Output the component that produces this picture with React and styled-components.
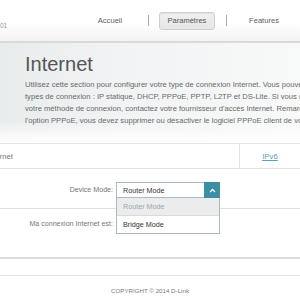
import React from "react";
import styled, { createGlobalStyle } from "styled-components";

const Global = createGlobalStyle`
  html, body {
    margin: 0;
    padding: 0;
    background: #fff;
    overflow: hidden;
  }
  body {
    font-family: "Liberation Sans", Arial, sans-serif;
  }
`;

const Page = styled.div`
  width: 300px;
  height: 300px;
  overflow: hidden;
  display: flex;
  flex-direction: column;
`;

const Header = styled.div`
  height: 41px;
  flex: none;
  display: flex;
  align-items: center;
  background: linear-gradient(to bottom, #ffffff 0%, #ffffff 55%, #f3f3f3 100%);
  border-bottom: 2px solid #d9d9d9;
  font-size: 7.6px;
  color: #5e5e5e;
`;

const Brand = styled.div`
  width: 85px;
  align-self: flex-start;
  padding-top: 22px;
  font-size: 6.5px;
  color: #999;
`;

const NavLink = styled.div`
  width: ${(p) => p.$w}px;
  margin-left: ${(p) => p.$ml || 0}px;
  text-align: center;
  white-space: nowrap;
`;

const NavSep = styled.div`
  width: 1px;
  height: 11px;
  margin-left: ${(p) => p.$ml}px;
  background: #a9a9a9;
`;

const NavTab = styled.div`
  width: 54px;
  height: 16px;
  margin-left: 10px;
  display: flex;
  align-items: center;
  justify-content: center;
  background: linear-gradient(to bottom, #f0f0f0, #e6e6e6);
  border: 1px solid #cfcfcf;
  border-radius: 3px;
  box-shadow: inset 0 1px 1px rgba(0, 0, 0, 0.06);
  font-size: 7.5px;
  color: #555;
`;

const Hero = styled.div`
  height: 100px;
  flex: none;
  box-sizing: border-box;
  padding: 11px 0 0 25px;
  background:
    linear-gradient(to bottom, rgba(255, 255, 255, 0) 78%, #ffffff 100%),
    linear-gradient(to right, #e9eced 0%, #f1f3f4 40%, #f8f9f9 100%);
`;

const Title = styled.h1`
  margin: 0 0 5px;
  font-size: 20px;
  line-height: 20px;
  font-weight: normal;
  color: #555;
`;

const Intro = styled.p`
  margin: 0;
  font-size: 7.62px;
  line-height: 11.9px;
  color: #6a6a6a;
  white-space: nowrap;
`;

const TabRow = styled.div`
  height: 24px;
  flex: none;
  display: flex;
  border-top: 1px solid #e6e6e6;
  border-bottom: 1px solid #e3e3e3;
`;

const TabCell = styled.div`
  flex: ${(p) => (p.$grow ? 1 : "none")};
  width: ${(p) => (p.$grow ? "auto" : "60px")};
  display: flex;
  align-items: center;
  justify-content: ${(p) => (p.$grow ? "flex-start" : "center")};
  border-left: ${(p) => (p.$grow ? "none" : "1px solid #e6e6e6")};
  font-size: 7.6px;
  color: #777;
  white-space: nowrap;
`;

const TabLabel = styled.span`
  margin-left: -13px;
`;

const TabLink = styled.span`
  color: #5a9fb3;
  text-decoration: underline;
  font-size: 7.8px;
`;

const Form = styled.div`
  flex: none;
  border-bottom: 2px solid #dcdcdc;
`;

const Row = styled.div`
  display: grid;
  grid-template-columns: 113px 104px;
  column-gap: 3px;
  align-items: center;
  padding: ${(p) => p.$pad};
  border-bottom: ${(p) => (p.$line ? "1px solid #e0e0e0" : "none")};
`;

const Label = styled.div`
  text-align: right;
  font-size: 7.1px;
  color: #777;
  white-space: nowrap;
`;

const SelectWrap = styled.div`
  position: relative;
`;

const Select = styled.div`
  height: 16px;
  box-sizing: border-box;
  display: flex;
  align-items: center;
  border: 1px solid #a9bcc4;
  background: #fff;
  font-size: 7.2px;
  color: #333;
`;

const SelectText = styled.span`
  flex: 1;
  padding-left: 6px;
`;

const Arrow = styled.div`
  width: 16px;
  height: 16px;
  margin: -1px -1px -1px 0;
  display: flex;
  align-items: center;
  justify-content: center;
  background: #3c8ea5;
`;

const Menu = styled.div`
  position: absolute;
  left: 0;
  right: 0;
  top: 16px;
  z-index: 2;
  background: #fff;
  border: 1px solid #a9bcc4;
  border-top: none;
`;

const MenuItem = styled.div`
  height: ${(p) => p.$h}px;
  display: flex;
  align-items: center;
  padding-left: 6px;
  font-size: 7.2px;
  background: ${(p) => (p.$active ? "#ececec" : "#fff")};
  color: ${(p) => (p.$active ? "#93aab4" : "#333")};
  border-bottom: ${(p) => (p.$active ? "1px solid #d9d9d9" : "none")};
`;

const Spacer = styled.div`
  height: 16px;
`;

const Footer = styled.div`
  flex: 1;
  margin-top: 16px;
  border-top: 1px solid #e4e4e4;
  display: flex;
  justify-content: center;
  padding-top: 11px;
  font-size: 6.2px;
  color: #7a7a7a;
`;

const Chevron = () => (
  <svg width="7" height="5" viewBox="0 0 7 5">
    <path d="M1 4 L3.5 1.5 L6 4" fill="none" stroke="#fff" strokeWidth="1.3" />
  </svg>
);

const App = () => {
  return (
    <Page>
      <Global />
      <Header>
        <Brand>01</Brand>
        <NavLink $w={50}>Accueil</NavLink>
        <NavSep $ml={13} />
        <NavTab>Paramètres</NavTab>
        <NavSep $ml={11} />
        <NavLink $w={50} $ml={12}>Features</NavLink>
      </Header>
      <Hero>
        <Title>Internet</Title>
        <Intro>
          Utilisez cette section pour configurer votre type de connexion Internet. Vous pouvez choisir parmi plusieurs
          <br />
          types de connexion : IP statique, DHCP, PPPoE, PPTP, L2TP et DS-Lite. Si vous ne connaissez pas
          <br />
          votre méthode de connexion, contactez votre fournisseur d'accès Internet. Remarque : si vous utilisez
          <br />
          l'option PPPoE, vous devez supprimer ou désactiver le logiciel PPPoE client de vos ordinateurs.
        </Intro>
      </Hero>
      <TabRow>
        <TabCell $grow>
          <TabLabel>Internet</TabLabel>
        </TabCell>
        <TabCell>
          <TabLink>IPv6</TabLink>
        </TabCell>
      </TabRow>
      <Form>
        <Row $pad="13px 0 10px" $line>
          <Label>Device Mode:</Label>
          <SelectWrap>
            <Select>
              <SelectText>Router Mode</SelectText>
              <Arrow>
                <Chevron />
              </Arrow>
            </Select>
            <Menu>
              <MenuItem $h={17} $active>Router Mode</MenuItem>
              <MenuItem $h={17}>Bridge Mode</MenuItem>
            </Menu>
          </SelectWrap>
        </Row>
        <Row $pad="7px 0 25px">
          <Label>Ma connexion Internet est:</Label>
          <Spacer />
        </Row>
      </Form>
      <Footer>COPYRIGHT © 2014 D-Link</Footer>
    </Page>
  );
};

export default App;
